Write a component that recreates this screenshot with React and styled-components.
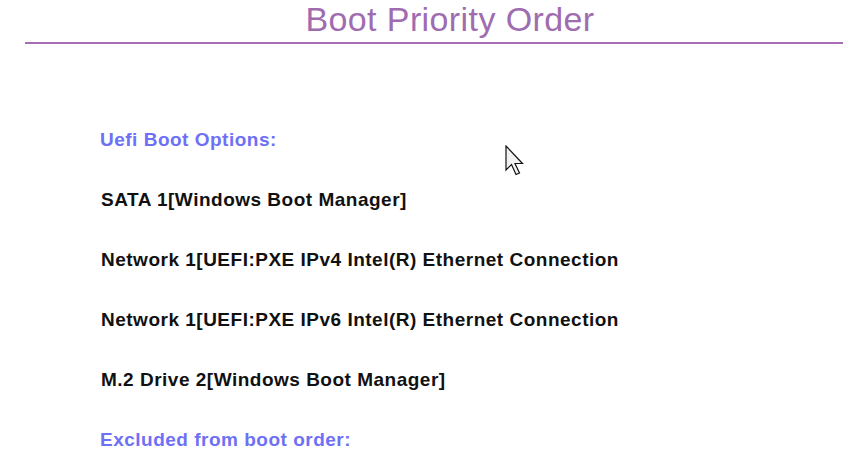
import styled, { createGlobalStyle } from "styled-components"

const Global = createGlobalStyle`
  body {
    margin: 0;
    background: #ffffff;
    font-family: "Liberation Sans", Arial, sans-serif;
  }
`;

const Page = styled.div`
  position: relative;
  width: 848px;
  height: 470px;
  overflow: hidden;
  background: #fff;
`;

const Header = styled.header`
  margin: 0 5px 0 25px;
  padding-bottom: 4px;
  border-bottom: 2px solid #a46db4;
`;

const Title = styled.h1`
  margin: 0;
  padding-left: 32px;
  text-align: center;
  font-size: 34px;
  line-height: 38px;
  font-weight: 400;
  letter-spacing: 0.4px;
  color: #a06cb0;
`;

const List = styled.div`
  display: flex;
  flex-direction: column;
  padding: 66px 0 0 100px;
`;

const Row = styled.div`
  font-size: 19px;
  line-height: 60px;
  font-weight: 700;
  letter-spacing: 0.5px;
  white-space: nowrap;
  color: ${(p) => (p.$heading ? "#6e70f6" : "#111111")};
  padding-left: ${(p) => (p.$heading ? "0" : "1px")};
`;

const Cursor = styled.svg`
  position: absolute;
  left: 505px;
  top: 145px;
`;

const options = [
  "SATA 1[Windows Boot Manager]",
  "Network 1[UEFI:PXE IPv4 Intel(R) Ethernet Connection",
  "Network 1[UEFI:PXE IPv6 Intel(R) Ethernet Connection",
  "M.2 Drive 2[Windows Boot Manager]",
];

const App = () => {
  return (
    <Page>
      <Global />
      <Header>
        <Title>Boot Priority Order</Title>
      </Header>
      <List>
        <Row $heading>Uefi Boot Options:</Row>
        {options.map((o) => (
          <Row key={o}>{o}</Row>
        ))}
        <Row $heading>Excluded from boot order:</Row>
      </List>
      <Cursor width="22" height="34" viewBox="0 0 22 34">
        <path
          d="M1 1 L1 25 L6.5 19.5 L11 29.5 L14.5 28 L10 18.5 L17.5 18.5 Z"
          fill="#f2f2f2"
          stroke="#111"
          strokeWidth="1.2"
          strokeLinejoin="miter"
        />
      </Cursor>
    </Page>
  )
}

export default App
